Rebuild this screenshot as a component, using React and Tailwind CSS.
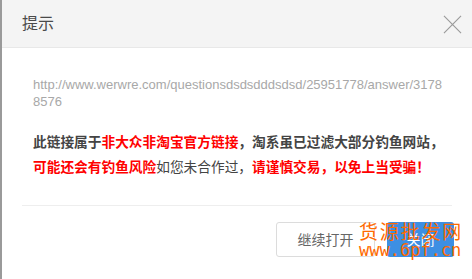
export default function App() {
  return (
    <div className="relative w-[472px] h-[279px] overflow-hidden bg-white border-l-2 border-[#9a9a9a] font-['Liberation_Sans','Noto_Sans_CJK_SC',sans-serif]">
      <div className="h-[48px] bg-[#f4f4f4] border-b border-[#e8e8e8] flex items-center justify-between pl-[20px] pr-[10px]">
        <span className="text-[16px] text-[#4a4a4a]">提示</span>
        <svg width="19" height="19" viewBox="0 0 20 20" className="mt-[1px]">
          <path d="M1 1L19 19M19 1L1 19" stroke="#9a9a9a" strokeWidth="1.2" fill="none" />
        </svg>
      </div>
      <div className="pl-[31px] pr-[26px] pt-[28px]">
        <p className="text-[13px] leading-[17px] text-[#a8a8a8] break-all">
          http://www.werwre.com/questionsdsdsdddsdsd/25951778/answer/31788576
        </p>
        <p className="mt-[19px] text-[13.7px] leading-[25px] font-bold text-[#444] font-['Noto_Sans_CJK_SC',sans-serif]">
          此链接属于<span className="text-[#f00]">非大众非淘宝官方链接</span>，淘系虽已过滤大部分钓鱼网站，
          <br />
          <span className="text-[#f00]">可能还会有钓鱼风险</span><span className="font-normal">如您未合作过，</span>
          <span className="text-[#f00]">请谨慎交易，以免上当受骗！</span>
        </p>
      </div>
      <div className="mx-[20px] mt-[26px] border-t border-[#eeeeee]"></div>
      <div className="flex justify-end gap-[12px] pr-[18px] pt-[16px]">
        <button className="w-[99px] h-[35px] border border-[#dcdcdc] rounded-[3px] bg-white text-[14px] text-[#666] font-['Noto_Sans_CJK_SC',sans-serif]">
          继续打开
        </button>
        <button className="w-[67px] h-[35px] rounded-[3px] bg-[#3d8fe3] text-[14px] text-white font-['Noto_Sans_CJK_SC',sans-serif]">
          关闭
        </button>
      </div>
      <div className="absolute left-[357px] top-[221px] flex flex-col items-start text-[#ff6a00] font-['Noto_Sans_CJK_SC',sans-serif] leading-none">
        <span className="text-[19px] tracking-[1.8px]">货源批发网</span>
        <span className="text-[17px] mt-[2px] font-['DejaVu_Sans_Mono',monospace]">www.6pf.cn</span>
      </div>
    </div>
  );
}
